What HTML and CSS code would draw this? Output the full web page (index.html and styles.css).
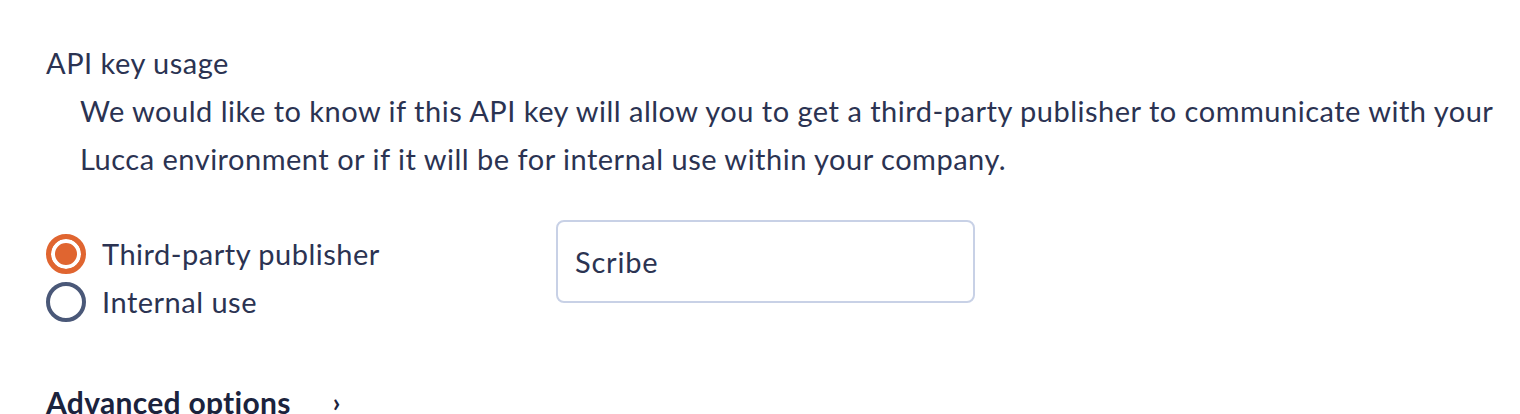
FILE: index.html
```html
<!DOCTYPE html>
<html lang="en">
<head>
  <meta charset="UTF-8">
  <title>API key</title>
  <link rel="stylesheet" href="styles.css">
</head>
<body>
  <div class="form">
    <!-- USAGE -->
    <div class="field">
      <div class="field-label">API key usage</div>
      <p class="field-help">We would like to know if this API key will allow you to get a third-party publisher to communicate with your Lucca environment or if it will be for internal use within your company.</p>
    </div>

    <div class="usage-row">
      <div class="radios">
        <label class="radio">
          <input type="radio" name="usage" checked>
          <span class="radio-mark"></span>
          <span>Third-party publisher</span>
        </label>
        <label class="radio">
          <input type="radio" name="usage">
          <span class="radio-mark"></span>
          <span>Internal use</span>
        </label>
      </div>
      <input class="text-input" type="text" value="Scribe">
    </div>

    <!-- ADVANCED -->
    <div class="advanced">
      <span>Advanced options</span>
      <span class="chevron">›</span>
    </div>
  </div>
</body>
</html>
```

FILE: styles.css
```css
body {
  margin: 0;
  background: #fff;
  font-family: "Lato", "Open Sans", sans-serif;
  color: #2b3352;
}

.form {
  padding: 39px 0 0 46px;
  font-size: 29px;
  letter-spacing: 0.5px;
  line-height: 48px;
}

.field-help {
  margin: 0 0 37px 34px;
  max-width: 1430px;
}

.usage-row {
  display: flex;
  align-items: flex-start;
}

.radios {
  width: 510px;
  padding-top: 10px;
  display: flex;
  flex-direction: column;
}

.radio {
  display: flex;
  align-items: center;
  gap: 16px;
  height: 48px;
  cursor: pointer;
}

.radio input {
  display: none;
}

.radio-mark {
  width: 40px;
  height: 40px;
  box-sizing: border-box;
  border-radius: 50%;
  border: 4px solid #4a5878;
}

.radio input:checked + .radio-mark {
  border: 5px solid #e06530;
  background: #e06530;
  box-shadow: inset 0 0 0 4px #fff;
}

.text-input {
  width: 419px;
  height: 83px;
  box-sizing: border-box;
  border: 2px solid #c8d1e6;
  border-radius: 8px;
  padding: 0 17px;
  font: inherit;
  letter-spacing: 0.8px;
  color: inherit;
}

.advanced {
  margin-top: 52px;
  font-weight: 700;
  font-size: 30px;
  letter-spacing: 0.3px;
  color: #1b233d;
  display: flex;
  gap: 42px;
}

.chevron {
  font-size: 26px;
}
```
